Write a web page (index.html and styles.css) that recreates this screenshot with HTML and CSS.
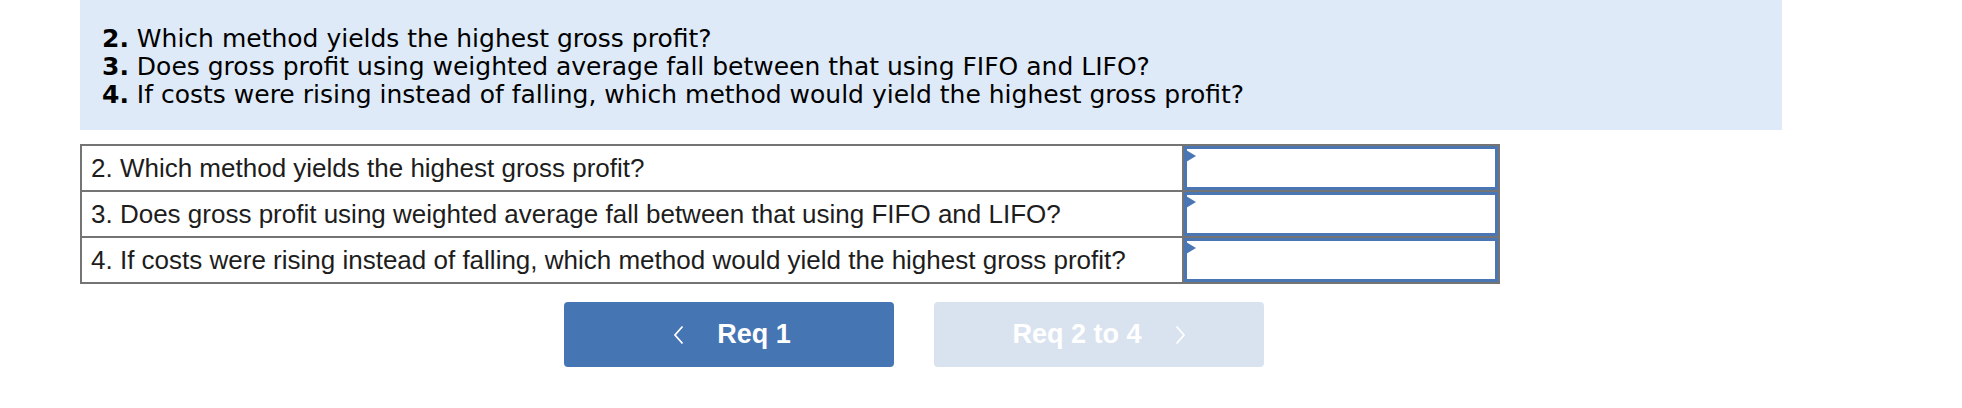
FILE: index.html
```html
<!DOCTYPE html>
<html>
<head>
<meta charset="utf-8">
<link rel="stylesheet" href="styles.css">
</head>
<body>
<div class="page">
  <div class="prompt">
    <p><b>2.</b> Which method yields the highest gross profit?</p>
    <p><b>3.</b> Does gross profit using weighted average fall between that using FIFO and LIFO?</p>
    <p><b>4.</b> If costs were rising instead of falling, which method would yield the highest gross profit?</p>
  </div>
  <div class="qa">
    <div class="row">
      <div class="label">2. Which method yields the highest gross profit?</div>
      <div class="answer"><div class="input"></div></div>
    </div>
    <div class="row">
      <div class="label">3. Does gross profit using weighted average fall between that using FIFO and LIFO?</div>
      <div class="answer"><div class="input"></div></div>
    </div>
    <div class="row">
      <div class="label">4. If costs were rising instead of falling, which method would yield the highest gross profit?</div>
      <div class="answer"><div class="input"></div></div>
    </div>
  </div>
  <div class="nav">
    <button class="btn btn-active">
      <svg class="chev" width="11" height="20" viewBox="0 0 11 20"><path d="M9.5 1.5 L2 10 L9.5 18.5" fill="none" stroke="#fff" stroke-width="1.8"/></svg>
      <span>Req 1</span>
    </button>
    <button class="btn btn-disabled">
      <span>Req 2 to 4</span>
      <svg class="chev" width="11" height="20" viewBox="0 0 11 20"><path d="M1.5 1.5 L9 10 L1.5 18.5" fill="none" stroke="#fff" stroke-width="1.8"/></svg>
    </button>
  </div>
</div>
</body>
</html>
```
FILE: styles.css
```css
html, body {
  margin: 0;
  padding: 0;
  background: #ffffff;
}
.page {
  padding-left: 80px;
}
.prompt {
  width: 1702px;
  height: 130px;
  box-sizing: border-box;
  padding: 25px 0 0 22px;
  background: #deeaf7;
  font-family: "DejaVu Sans", Verdana, sans-serif;
  font-size: 25px;
  line-height: 28px;
  color: #000;
}
.prompt p {
  margin: 0;
}
.qa {
  width: 1420px;
  box-sizing: border-box;
  margin-top: 14px;
  border: 2px solid #747474;
}
.row {
  display: flex;
  height: 44px;
}
.row + .row {
  border-top: 2px solid #747474;
}
.label {
  box-sizing: border-box;
  border-right: 2px solid #747474;
  width: 1102px;
  padding-left: 9px;
  font-family: "Liberation Sans", Arial, sans-serif;
  font-size: 26px;
  line-height: 44px;
  color: #1d1d1d;
  white-space: nowrap;
}
.answer {
  flex: 1;
  display: flex;
}
.input {
  flex: 1;
  position: relative;
  border: 3px solid #4a77b4;
  background: #fff;
}
.input::before {
  content: "";
  position: absolute;
  left: -1px;
  top: 1px;
  border-top: 6px solid transparent;
  border-bottom: 6px solid transparent;
  border-left: 10px solid #4a77b4;
}
.nav {
  display: flex;
  gap: 40px;
  margin-top: 18px;
  padding-left: 484px;
}
.btn {
  width: 330px;
  height: 65px;
  border: none;
  border-radius: 4px;
  display: flex;
  align-items: center;
  justify-content: center;
  gap: 33px;
  font-family: "Liberation Sans", Arial, sans-serif;
  font-weight: bold;
  font-size: 27px;
  color: #fff;
  padding: 0;
}
.btn-active {
  background: #4675b4;
  padding-left: 6px;
}
.btn-disabled {
  background: #d9e3ef;
}
.chev {
  display: block;
}
```
